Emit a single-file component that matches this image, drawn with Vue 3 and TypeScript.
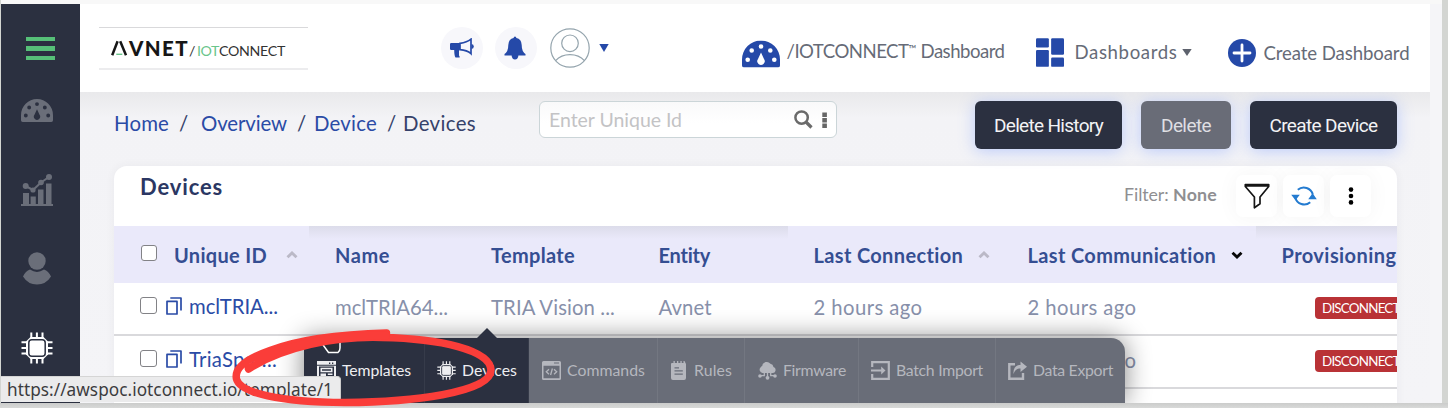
<script setup lang="ts">
import type { Directive } from 'vue'

interface Label { text: string; width: number }
interface Crumb extends Label { link: boolean; step: number }
interface Column extends Label { sort?: 'up' | 'down'; shaded: boolean; gap?: number }
interface Row { id: Label; cells: Label[] }
interface MenuItem extends Label { icon: string; active?: boolean; cell: number; gap: number }

// Tracks a label out (or in) so that it fills its allotted width.
const vFit: Directive<HTMLElement, number> = {
  mounted(el, { value }) {
    const count = (el.textContent ?? '').length
    const range = document.createRange()
    range.selectNodeContents(el)
    const natural = range.getBoundingClientRect().width
    el.style.letterSpacing = `${((value - natural) / count).toFixed(3)}px`
  },
}

const crumbs: Crumb[] = [
  { text: 'Home', width: 55, link: true, step: 65 },
  { text: '/', width: 7, link: false, step: 22 },
  { text: 'Overview', width: 86, link: true, step: 96 },
  { text: '/', width: 7, link: false, step: 17 },
  { text: 'Device', width: 63, link: true, step: 73 },
  { text: '/', width: 7, link: false, step: 16 },
  { text: 'Devices', width: 73, link: false, step: 80 },
]

const columns: Column[] = [
  { text: 'Unique ID', width: 93, sort: 'up', shaded: false, gap: 19 },
  { text: 'Name', width: 55, shaded: true },
  { text: 'Template', width: 84, shaded: true },
  { text: 'Entity', width: 52, shaded: true },
  { text: 'Last Connection', width: 150, sort: 'up', shaded: false, gap: 15 },
  { text: 'Last Communication', width: 189, sort: 'down', shaded: false, gap: 15 },
  { text: 'Provisioning', width: 115, shaded: true },
]

const rest: Label[] = [
  { text: 'TRIA Vision ...', width: 124 },
  { text: 'Avnet', width: 53 },
  { text: '2 hours ago', width: 109 },
  { text: '2 hours ago', width: 109 },
]
const rows: Row[] = [
  { id: { text: 'mclTRIA...', width: 89 }, cells: [{ text: 'mclTRIA64...', width: 113 }, ...rest] },
  { id: { text: 'TriaSpar...', width: 88 }, cells: [{ text: 'TriaSpar...', width: 88 }, ...rest] },
]

const menu: MenuItem[] = [
  { text: 'Templates', width: 69, icon: 'template', active: true, cell: 121, gap: 13 },
  { text: 'Devices', width: 55, icon: 'chip', active: true, cell: 104, gap: 12 },
  { text: 'Commands', width: 78, icon: 'command', cell: 129, gap: 13 },
  { text: 'Rules', width: 38, icon: 'rules', cell: 87, gap: 11 },
  { text: 'Firmware', width: 63, icon: 'firmware', cell: 114, gap: 13 },
  { text: 'Batch Import', width: 87, icon: 'import', cell: 137, gap: 12 },
  { text: 'Data Export', width: 80, icon: 'export', cell: 130, gap: 12 },
]
</script>

<template>
  <div class="window">
    <svg class="defs" width="0" height="0">
      <defs>
        <symbol id="gauge" viewBox="0 0 38 27">
          <path fill-rule="evenodd" d="M0 25V19A19 19 0 0 1 38 19V25Q38 27 36 27H2Q0 27 0 25Z M19 12L16 18.5A3.7 3.7 0 1 0 22 18.5Z M8 19.3A2.3 2.3 0 1 0 3.4 19.3A2.3 2.3 0 1 0 8 19.3Z M34.6 19.3A2.3 2.3 0 1 0 30 19.3A2.3 2.3 0 1 0 34.6 19.3Z M12 10A2.3 2.3 0 1 0 7.4 10A2.3 2.3 0 1 0 12 10Z M30.6 10A2.3 2.3 0 1 0 26 10A2.3 2.3 0 1 0 30.6 10Z M21.3 6A2.3 2.3 0 1 0 16.7 6A2.3 2.3 0 1 0 21.3 6Z" />
        </symbol>
        <symbol id="chip" viewBox="0 0 32 32">
          <path d="M10.3 .5v31M15.9 .5v31M21.5 .5v31M.5 10.3h31M.5 15.9h31M.5 21.5h31" stroke="currentColor" stroke-width="2" fill="none" />
          <path d="M9.5 5H22.5L27 9.5V22.5L22.5 27H9.5L5 22.5V9.5Z" fill="currentColor" />
          <rect x="7.8" y="7.8" width="16.4" height="16.4" rx="3" fill="none" stroke="#2b3040" stroke-width="1.5" />
        </symbol>
        <symbol id="template" viewBox="0 0 19 19">
          <path fill="currentColor" fill-rule="evenodd" d="M0 0H19V19H0Z M2 5.5V17H17V5.5Z M12 1.5V3H13.3V1.5Z M15 1.5V3H16.3V1.5Z M0 3.8V4.7H19V3.8Z" />
          <path fill="currentColor" fill-rule="evenodd" d="M3.5 6.8H15.5V11.2H3.5Z M5 8.2V9.8H14V8.2Z M3.5 12.5H9V17H3.5Z M10.8 12.5H15.5V14H10.8Z M10.8 15H15.5V16H10.8Z" />
        </symbol>
        <symbol id="command" viewBox="0 0 19 19">
          <path fill="currentColor" fill-rule="evenodd" d="M1.5 0H17.5Q19 0 19 1.5V17.5Q19 19 17.5 19H1.5Q0 19 0 17.5V1.5Q0 0 1.5 0Z M1.5 4.8V17.3H17.5V4.8Z M12 1.5V2.6H17V1.5Z" />
          <path d="M7 8.3L4.3 10.8L7 13.3M12 8.3L14.7 10.8L12 13.3M10.4 7.5L8.6 14" fill="none" stroke="currentColor" stroke-width="1.3" />
        </symbol>
        <symbol id="rules" viewBox="0 0 19 19">
          <path fill="currentColor" fill-rule="evenodd" d="M3 2H4.5V0H5.8V2H8V0H9.3V2H11.4V0H12.7V2H14.5V0H15.5L17 3V17Q17 19 15 19H4Q2 19 2 17V3Q2 2 3 2Z M5.5 6.2V7.5H10V6.2Z M5.5 9.2V10.5H13.8V9.2Z M5.5 12.5V13.8H13.8V12.5Z" />
        </symbol>
        <symbol id="firmware" viewBox="0 0 19 19">
          <path fill="currentColor" d="M4.5 12A3.3 3.3 0 0 1 2.5 6.5Q3.2 5.4 4.2 5A4.6 4.6 0 0 1 12.4 2.7A4 4 0 0 1 15.5 6A3.1 3.1 0 0 1 15 12Z" />
          <path d="M9.5 11V16M6.3 11V14.7H2M12.7 11V14.7H17" stroke="currentColor" stroke-width="1.3" fill="none" />
          <circle cx="9.5" cy="16.8" r="1.9" fill="currentColor" /><circle cx="2" cy="15" r="1.8" fill="currentColor" /><circle cx="17" cy="15" r="1.8" fill="currentColor" />
        </symbol>
        <symbol id="import" viewBox="0 0 19 19">
          <path d="M1.2 6V1.2H17.8V17.8H1.2V13M0 9.5H12" fill="none" stroke="currentColor" stroke-width="2.2" />
          <path d="M10.2 5.6L14.5 9.5L10.2 13.4Z" fill="currentColor" />
        </symbol>
        <symbol id="export" viewBox="0 0 19 19">
          <path d="M7 3.2H1.3V17.7H15V12" fill="none" stroke="currentColor" stroke-width="2.4" />
          <path d="M5.5 13C5 7 8 4 12.5 4V0.6L19 5.8L12.5 11V7.4C9 7.4 7 9 5.5 13Z" fill="currentColor" />
        </symbol>
        <symbol id="copy" viewBox="0 0 16 18">
          <path d="M1 4.4H11V17H1ZM4.3 1H15V13.6" fill="none" stroke="currentColor" stroke-width="1.7" stroke-linejoin="round" />
        </symbol>
        <symbol id="chevron" viewBox="0 0 12 8">
          <path d="M1.5 6.3L6 2L10.5 6.3" fill="none" stroke="currentColor" stroke-width="2.9" />
        </symbol>
      </defs>
    </svg>

    <aside class="sidebar">
      <button class="burger"><i /><i /><i /></button>
      <svg class="side gauge" viewBox="0 0 38 27" preserveAspectRatio="none"><use href="#gauge" fill="currentColor" /></svg>
      <svg class="side chart" viewBox="0 0 32 32">
        <path d="M0 30h32v2H0zM2 19h6v11H2zM9.6 22.5h5.2V30H9.6zM17 15.5h5.5V30H17zM25 9.5h5.5V30H25z" fill="currentColor" />
        <path d="M4.5 12L12 16L20 8.5L28 3" stroke="currentColor" stroke-width="2" fill="none" />
        <circle cx="4.7" cy="12" r="3" fill="currentColor" /><circle cx="12" cy="16" r="2.6" fill="currentColor" /><circle cx="20" cy="8.5" r="2.8" fill="currentColor" /><circle cx="28" cy="3" r="3" fill="currentColor" />
      </svg>
      <svg class="side person" viewBox="0 0 28 33">
        <circle cx="14" cy="9" r="8.7" fill="currentColor" />
        <path d="M0 24.5Q2.5 19 7 17.6Q14 22.2 21 17.6Q25.5 19 28 24.5Q23 32.5 14 32.5Q5 32.5 0 24.5Z" fill="currentColor" />
      </svg>
      <svg class="side chip"><use href="#chip" /></svg>
    </aside>

    <header class="topbar">
      <div class="logo">
        <svg viewBox="0 0 18 16" class="peak"><path d="M1.2 15.3L6.6 1.2M9.2 1.2L15 15.3" fill="none" stroke="#161616" stroke-width="2.5" /><path d="M5.3 14.3H11.3" stroke="#69c58b" stroke-width="1.4" /></svg>
        <b v-fit="60">VNET</b>
        <span class="product"><span v-fit="8">/</span><em v-fit="22">IOT</em><span v-fit="66">CONNECT</span></span>
      </div>
      <div class="quick">
        <span class="bubble">
          <svg viewBox="0 0 24 20" width="24" height="20">
            <path d="M0 6.2Q0 5 1.2 5H10V11.8H9V17.5Q9.7 18 9.7 19.5H5.5Q4.3 18 4.2 12H1.2Q0 12 0 10.8Z" fill="#2549a8" />
            <path d="M10 5.3Q17 4.5 21 1.2V15.7Q17 12 10 11.6Z" fill="none" stroke="#2549a8" stroke-width="1.7" />
            <path d="M21.5 6V11Q23.8 10.8 23.8 8.5Q23.8 6.2 21.5 6Z" fill="#2549a8" />
          </svg>
        </span>
        <span class="bubble">
          <svg viewBox="0 0 22 24" width="22" height="24">
            <path d="M11 0.4Q12.3 .4 12.4 2Q17.5 3 17.7 9Q17.7 15.5 21.5 18V19.6H.5V18Q4.3 15.5 4.3 9Q4.5 3 9.6 2Q9.7.4 11 .4ZM7.5 19H14.5Q14 23.6 11 23.6Q8 23.6 7.5 19Z" fill="#2549a8" />
          </svg>
        </span>
        <svg class="avatar" viewBox="0 0 40 40">
          <g fill="none" stroke="#94a4ad" stroke-width="1.2"><circle cx="20" cy="20" r="19.2" /><circle cx="20" cy="15.3" r="8.3" /><path d="M5.6 32.6Q11 26.6 20 26.6Q29 26.6 34.4 32.6" /></g>
        </svg>
        <svg class="caret" viewBox="0 0 10 8"><path d="M.3 0H9.7L5 8Z" fill="#2549a8" /></svg>
      </div>
      <nav class="links">
        <svg width="38" height="28" viewBox="0 0 38 27" class="dash"><use href="#gauge" fill="#2549a8" /></svg>
        <span v-fit="218" class="l1">/IOTCONNECT<sup>™</sup> Dashboard</span>
        <svg class="tiles" viewBox="0 0 28.3 29" width="28" height="29"><g fill="#2549a8"><rect width="13" height="9.5" rx="1.2" /><rect y="12" width="13" height="17" rx="1.2" /><rect x="15.3" width="13" height="16.7" rx="1.2" /><rect x="15.3" y="19.5" width="13" height="9.5" rx="1.2" /></g></svg>
        <span v-fit="103" class="l2">Dashboards</span>
        <svg class="down" viewBox="0 0 10 7"><path d="M.3 0H9.7L5 7Z" fill="#5d626d" /></svg>
        <svg class="plus" viewBox="0 0 28 28" width="28" height="28"><circle cx="14" cy="14" r="14" fill="#2549a8" /><path d="M14 6V22M6 14H22" stroke="#fff" stroke-width="2.8" stroke-linecap="round" /></svg>
        <span v-fit="146" class="l3">Create Dashboard</span>
      </nav>
    </header>

    <main class="main">
      <div class="toolbar">
        <div class="crumbs">
          <div v-for="(c, i) in crumbs" :key="i" :class="['crumb', { link: c.link }]" :style="{ width: c.step + 'px' }"><span v-fit="c.width">{{ c.text }}</span></div>
        </div>
        <div class="search">
          <span v-fit="133">Enter Unique Id</span>
          <svg viewBox="0 0 34 19" width="34" height="19"><circle cx="7.6" cy="7.6" r="6.2" fill="none" stroke="#6a6a6a" stroke-width="2.5" /><path d="M12 12L17.5 17.5" stroke="#6a6a6a" stroke-width="3.2" /><path d="M28.3 2.5h4.6v4.4h-4.6zM28.3 8h4.6v4.4h-4.6zM28.3 13.5h4.6v4.4h-4.6z" fill="#666" /></svg>
        </div>
        <div class="actions">
          <button class="wide"><span v-fit="109">Delete History</span></button>
          <button class="off"><span v-fit="50">Delete</span></button>
          <button class="wide"><span v-fit="108">Create Device</span></button>
        </div>
      </div>

      <section class="card">
        <div class="card-head">
          <h2><span v-fit="83">Devices</span></h2>
          <div class="tools">
            <span class="filter"><span v-fit="49">Filter: </span><b v-fit="44">None</b></span>
            <span class="tool"><svg viewBox="0 0 26 27" width="26" height="27"><path d="M1.3 1.5H24.7V3.5L16 14V20.8L10.4 24.8V14L1.3 3.5Z M1.3 3H24.7" fill="none" stroke="#151515" stroke-width="1.7" stroke-linejoin="round" /></svg></span>
            <span class="tool"><svg viewBox="0 0 26 22" width="26" height="22"><path d="M6.8 4.8A9.2 9.2 0 0 1 21.8 9.5M19.2 17.2A9.2 9.2 0 0 1 4.2 12.5" fill="none" stroke="#247bd0" stroke-width="2" /><path d="M.2 9.7H8.8L4.5 15.3ZM17.2 14.2H25.8L21.6 8.3Z" fill="#247bd0" /></svg></span>
            <span class="tool"><svg viewBox="0 0 6 18" width="6" height="18"><circle cx="3" cy="2.6" r="2.3" /><circle cx="3" cy="9" r="2.3" /><circle cx="3" cy="15.4" r="2.3" /></svg></span>
          </div>
        </div>
        <div class="grid head">
          <div v-for="(c, i) in columns" :key="c.text" :class="['cell', { shaded: c.shaded }]">
            <i v-if="i === 0" class="box" />
            <span v-fit="c.width">{{ c.text }}</span>
            <svg v-if="c.sort" :class="['sort', c.sort]" :style="{ marginLeft: c.gap + 'px' }"><use href="#chevron" /></svg>
          </div>
        </div>
        <div v-for="(r, i) in rows" :key="i" class="grid row">
          <div class="cell id"><i class="box" /><svg class="copy"><use href="#copy" /></svg><span v-fit="r.id.width">{{ r.id.text }}</span></div>
          <div v-for="(c, j) in r.cells" :key="j" class="cell"><span v-fit="c.width">{{ c.text }}</span></div>
          <div class="cell state"><span class="badge"><span v-fit="94">DISCONNECTED</span></span></div>
        </div>
      </section>
    </main>

    <nav class="submenu">
      <div v-for="m in menu" :key="m.text" :class="['item', { active: m.active }]" :style="{ width: m.cell + 'px', paddingLeft: m.gap + 'px' }">
        <svg class="micon"><use :href="'#' + m.icon" /></svg><span v-fit="m.width">{{ m.text }}</span>
      </div>
      <i class="pointer" />
    </nav>
    <svg class="hand" viewBox="0 0 20 16"><path d="M1 0V4.5L7.5 13.5H17Q19 12 19 9V0Z" fill="#2b2d35" stroke="#fff" stroke-width="1.5" /></svg>
    <div class="status"><span v-fit="326">https://awspoc.iotconnect.io/template/1</span></div>
    <svg class="mark" viewBox="220 320 290 88" width="290" height="88">
      <path d="M386.5 333C350 334 303 338 270 350.5C246 359 234 368 236.5 379C240 393 280 402 345 402.5C410 402 491 393 491 370C490 350 440 338.5 382 337.5C335 336 283 347 248.5 369" />
      <path d="M386 335.5C350 335 310 341 283 350" class="thick" />
    </svg>
  </div>
</template>

<style>
body { margin: 0; background: #d2d4d1; overflow: hidden; }
</style>

<style scoped>
* { box-sizing: border-box; }
.window {
  position: relative; width: 1448px; height: 408px; overflow: hidden;
  display: grid; grid-template: 88px 311px / 79px 1362px;
  padding: 4px 6px 5px 1px; background: linear-gradient(#f8f8f8 4px, #f5f5f8 4px) 1px 0 / 1441px 403px no-repeat, linear-gradient(#d3d5d2 403px, #cbcccb 403px, #d8d9d8);
  font-family: Lato, "Liberation Sans", sans-serif; color: #666b77;
}
.window span, .window b, .window em { white-space: pre; }
svg { display: block; flex: none; }
.defs { position: absolute; }

.sidebar { grid-row: 1 / 3; background: #2b3040; display: flex; flex-direction: column; align-items: center; color: #6a6e79; padding-right: 7px; }
.burger { margin: 33px 0 0 7px; width: 29px; height: 23px; padding: 0; border: 0; background: none; display: flex; flex-direction: column; justify-content: space-between; }
.burger i { height: 4.3px; background: #56c078; }
.gauge { width: 32px; height: 23px; margin-top: 39px; }
.chart { width: 32px; height: 32px; margin-top: 52px; }
.person { width: 28px; height: 33px; margin-top: 46px; }
.chip { width: 32px; height: 32px; margin-top: 47px; color: #fff; }

.topbar { width: 1350px; background: #fff; display: flex; align-items: flex-start; grid-column: 2; }
.topbar::after { content: ""; }
.logo { flex: none; margin: 23px 0 0 19px; width: 209px; height: 43px; border: solid #d9d9db; border-width: 1px 0; border-bottom: 2px solid #ececee; display: flex; padding: 12px 0 0 12px; color: #161616; }
.peak { width: 18px; height: 16px; }
.logo b { font-size: 20.5px; line-height: 17px; font-weight: 900; }
.product { display: flex; font-size: 14.2px; line-height: 21px; color: #333; }
.product em { font-style: normal; color: #69c58b; }
.quick { flex: none; display: flex; margin: 23px 0 0 132.5px; width: 180px; }
.bubble { width: 42px; height: 42px; border-radius: 50%; background: #f7f7fb; display: flex; align-items: center; justify-content: center; margin-right: 12px; }
.bubble + .bubble { margin-right: 13px; }
.bubble + .bubble svg { margin-right: 1px; }
.avatar { width: 40px; height: 40px; margin: 1px 0 0 0; }
.caret { width: 10px; height: 8px; margin: 17px 0 0 9.5px; }
.links { display: flex; font-size: 18.6px; line-height: 22px; margin-left: 121px; }
.dash { margin: 36px 7px 0 0; }
.l1 { margin-top: 35.5px; width: 218px; }
.l1 sup { font-size: 11px; line-height: 0; vertical-align: 5px; }
.tiles { margin: 34px 11px 0 31px; }
.l2 { margin-top: 37px; }
.down { width: 10px; height: 7px; margin: 45px 36px 0 4px; }
.plus { margin: 34.5px 8px 0 0; }
.l3 { margin-top: 38px; }

.main { background: linear-gradient(#e9e9eb, #f3f3f6 26px, #f4f4f7); padding: 9px 45px 0 34px; overflow: hidden; background-size: 1350px 100%; background-color: #f5f5f8; background-repeat: no-repeat; }
.toolbar { display: flex; height: 65px; }
.crumbs { display: flex; width: 425px; font-size: 20.4px; line-height: 24px; padding-top: 10px; color: #35416a; }
.crumb { flex: none; }
.link { color: #2a4ba6; }
.search { width: 298px; height: 37px; border: 1.5px solid #cbd5d8; border-radius: 6px; background: linear-gradient(#f9f9fa, #fff 60%); display: flex; justify-content: space-between; align-items: center; padding: 0 8px 0 9px; font-size: 19.5px; color: #c3c3c5; }
.actions { display: flex; gap: 19px; margin-left: 138px; }
.actions button { height: 48px; width: 90px; border: 0; border-radius: 6px; background: #2b3040; color: #f3f3f5; font: 400 19px "Roboto", sans-serif; padding: 0; box-shadow: 0 2px 16px rgba(110, 145, 255, .42); }
.actions button.wide { width: 147px; }
.actions button.off { background: #696c77; color: #dfdfe3; }

.card { width: 1283px; background: #fff; border-radius: 13px 13px 0 0; overflow: hidden; height: 240px; box-shadow: 0 0 10px rgba(60, 60, 90, .06); }
.card-head { height: 60px; display: flex; justify-content: space-between; }
h2 { margin: 9px 0 0 26px; font-size: 22px; line-height: 24px; color: #2b3763; }
.tools { display: flex; padding: 9px 26px 0 0; gap: 6px; }
.filter { display: flex; font-size: 17.8px; line-height: 22px; color: #8f8f92; margin: 8px 13px 0 0; }
.tool { width: 41px; height: 42px; border-radius: 7px; background: #fff; box-shadow: 0 0 22px rgba(0, 0, 0, .045); display: flex; justify-content: center; align-items: center; }
.grid { display: grid; grid-template-columns: 195px 156px 168px 155px 214px 254px 200px; width: 1342px; }
.cell { display: flex; padding-left: 26px; white-space: nowrap; overflow: hidden; font-size: 20.3px; line-height: 24px; }
.cell:nth-child(n + 4) { padding-left: 25.5px; }
.head { height: 57px; background: #eae9fa; color: #354e92; }
.head .cell { padding-top: 17px; font-weight: 700; font-size: 20px; }
.head .shaded { background: linear-gradient(#dcdcea, #eae9fa 13px); }
.box { flex: none; width: 16px; height: 16px; border: 1.4px solid #828286; border-radius: 3px; background: #fff; margin: 2px 17px 0 1px; }
.sort { width: 12px; height: 8px; margin-top: 8px; color: #bbb9c7; }
.sort.down { transform: rotate(180deg); color: #080808; }
.row { height: 53px; border-bottom: 2px solid #d9d9dc; color: #8790aa; }
.row .cell { padding-top: 12px; }
.row .id { color: #2a4ba6; padding-top: 11px; }
.row .box { width: 17px; height: 17px; margin: 3px 9px 0 0; }
.copy { width: 16px; height: 18px; margin: 3px 7px 0 0; }
.row .state { padding: 14px 0 0 59px; }
.badge { background: #b93236; color: #fff; border-radius: 4px; height: 22px; padding: 0 7px; font-size: 13.4px; line-height: 23px; }

.submenu { position: absolute; left: 304px; top: 338px; display: flex; width: 821px; height: 65px; background: #696d78; border-radius: 0 14px 0 0; box-shadow: 0 0 26px rgba(0, 0, 0, .48); clip-path: inset(-40px -40px 0 -40px); }
.item { flex: none; display: flex; align-items: center; font-size: 15.8px; line-height: 20px; color: #b5b7be; border-right: 1px solid #737781; overflow: hidden; padding-bottom: 1px; }
.item:nth-child(7) { border: 0; }
.item.active { background: #2b3040; color: #eeeef1; border-color: #363b4a; }
.micon { width: 19px; height: 19px; margin: 0 6px 0 0; }
.item span { margin-top: -1px; }
.pointer { position: absolute; left: 173px; top: -10px; border: 10px solid transparent; border-top: 0; border-bottom-color: #2b3040; }
.hand { position: absolute; left: 321px; top: 339px; width: 20px; height: 16px; }
.status { position: absolute; left: 1px; top: 376px; width: 340px; height: 26px; background: #ebebec; border-top: 1px solid #d5d5d5; border-right: 1px solid #ccc; border-radius: 0 4px 0 0; padding-left: 6px; font: 17.2px/25px "Noto Sans", sans-serif; color: #3c3c3e; }
.mark { position: absolute; left: 220px; top: 320px; fill: none; stroke: #fa3d39; stroke-width: 7.5; stroke-linecap: round; }
.thick { stroke-width: 8; }
</style>
